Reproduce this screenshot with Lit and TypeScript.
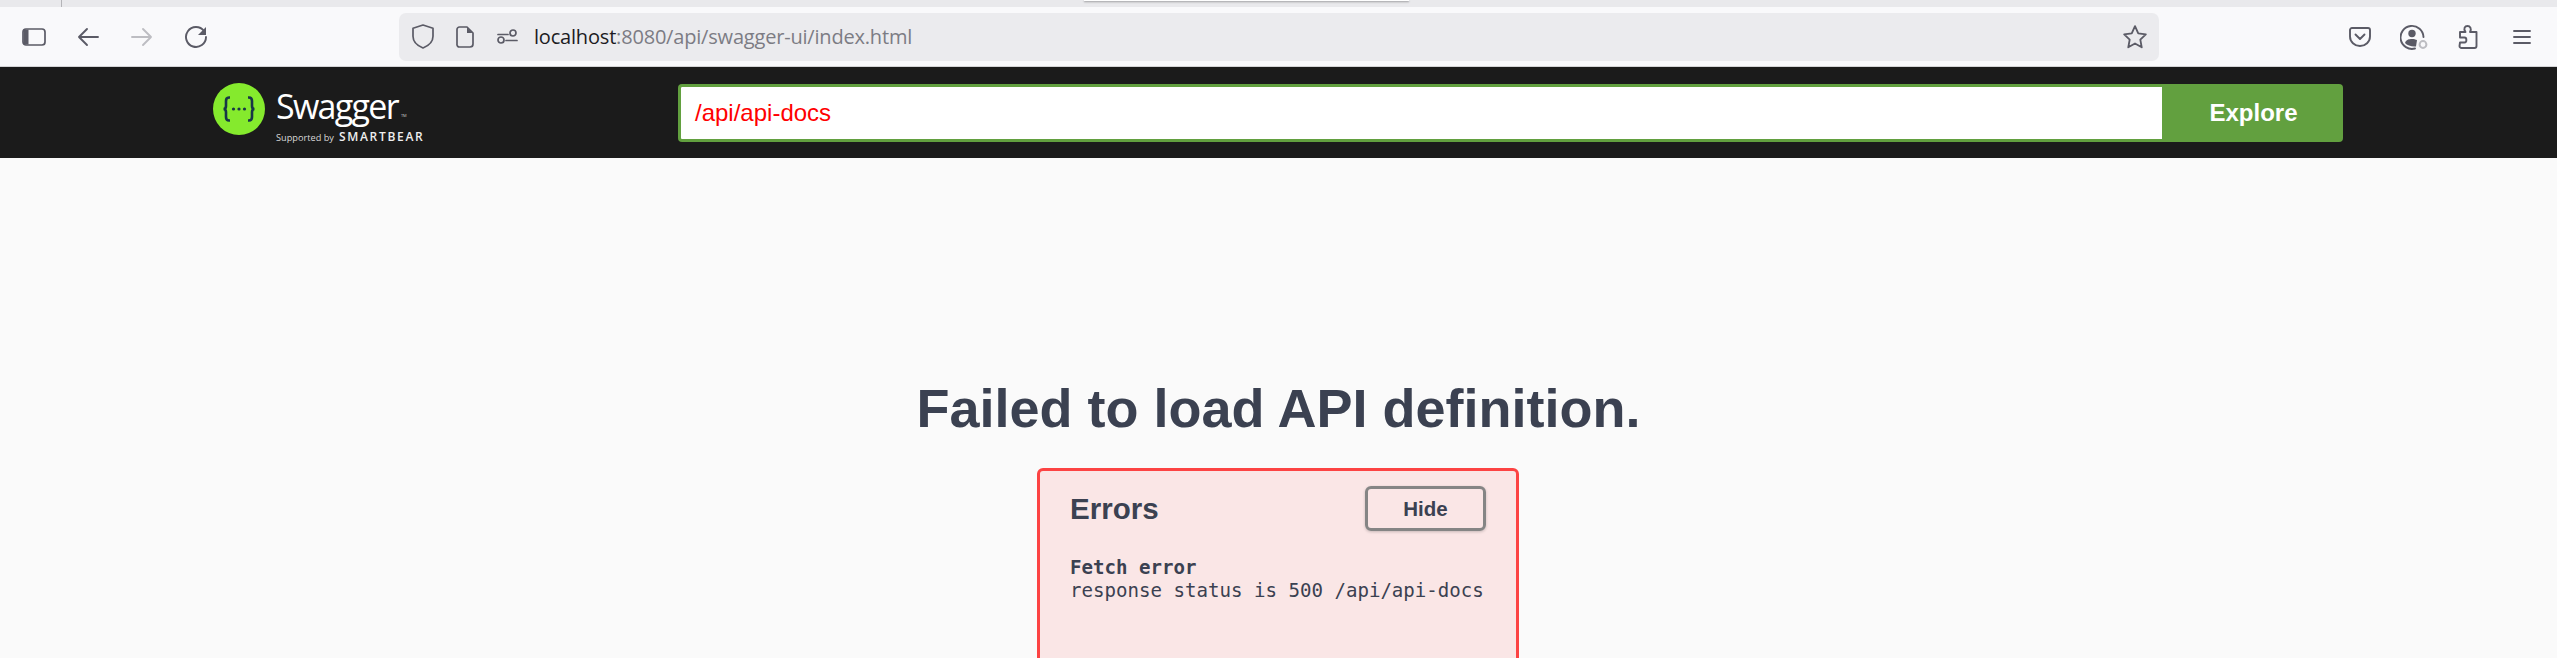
import { LitElement, html, css } from "lit";
import { customElement } from "lit/decorators.js";

@customElement("app-root")
export class AppRoot extends LitElement {
  static styles = css`
    :host { display: block; width: 2557px; height: 658px; overflow: hidden; background: #fafafa; font-family: "Liberation Sans", Arial, sans-serif; color: #3b4151; }
    .tabs { height: 7px; background: #e9e9ec; display: flex; position: relative; }
    .tabsep { margin-left: 61px; width: 1px; background: #b4b4b8; }
    .popup { position: absolute; left: 1084px; top: 0; width: 325px; height: 1px; background: #fff; box-shadow: 0 1px 2px rgba(0,0,0,.45); }
    .toolbar { height: 60px; background: #f9f9fb; border-bottom: 1px solid #d4d4d6; display: flex; align-items: center; box-sizing: border-box; }
    .tb-left { display: flex; align-items: center; width: 399px; padding-left: 22px; box-sizing: border-box; gap: 30px; }
    svg { display: block; flex: none; }
    .ico { fill: none; stroke: #5b5b66; stroke-width: 1.7; stroke-linecap: round; stroke-linejoin: round; }
    .urlbar { width: 1760px; height: 48px; border-radius: 7px; background: #ebebee; display: flex; align-items: center; padding-left: 3px; box-sizing: border-box; }
    .url { font: 20px/1 "Open Sans", "Noto Sans", sans-serif; letter-spacing: -0.19px; margin-left: 6px; color: #7c7c84; white-space: nowrap; flex: 1; }
    .url b { font-weight: 400; color: #1c1b22; }
    .url-icons { display: flex; align-items: center; }
    .cell { width: 42px; display: flex; justify-content: center; }
    .star { margin-right: 11px; }
    .tb-right { display: flex; align-items: center; margin-left: 174px; }
    .rcell { width: 54px; display: flex; justify-content: center; }
    .topbar { height: 91px; background: #1b1b1b; display: flex; align-items: center; }
    .logo { margin-left: 213px; width: 220px; align-self: flex-start; margin-top: 16px; display: flex; align-items: flex-start; gap: 11px; flex: none; }
    .logo-text { display: flex; flex-direction: column; color: #fff; font-family: "Open Sans", "Noto Sans", sans-serif; margin-top: 6px; }
    .sw { font-size: 34px; line-height: 34px; letter-spacing: -1.7px; font-weight: 400; display: flex; align-items: flex-end; }
    .tm { font-size: 4px; line-height: 4px; letter-spacing: 0; margin: 0 0 5px 3px; color: #ccc; }
    .sup { display: flex; align-items: baseline; gap: 5px; font-size: 9.2px; line-height: 12px; color: #d8d8d8; margin-top: 8px; white-space: nowrap; }
    .bear { font-size: 12px; letter-spacing: 1.7px; font-weight: 600; color: #eee; }
    .form { display: flex; margin-left: 245px; width: 1665px; height: 58px; flex: none; }
    .input { flex: 1; background: #fff; border: 3px solid #62a03f; border-right: 0; border-radius: 4px 0 0 4px; box-sizing: border-box; display: flex; align-items: center; padding-left: 14px; color: #f00; font-size: 24px; font-weight: 400; }
    .explore { width: 181px; background: #62a03f; color: #fff; font-size: 24px; font-weight: 700; display: flex; align-items: center; justify-content: center; border-radius: 0 4px 4px 0; box-sizing: border-box; padding-left: 2px; }
    .main { display: flex; flex-direction: column; align-items: center; }
    h1 { margin: 0; padding-top: 219px; font-size: 54px; line-height: 62px; font-weight: 700; color: #3b4151; white-space: nowrap; text-align: center; width: 100%; }
    .err { margin-top: 29px; margin-left: -1px; width: 482px; height: 300px; background: #fae6e6; border: 3px solid #fc4343; border-radius: 6px; box-sizing: border-box; padding: 15px 30px 15px 30px; flex: none; }
    .err-head { display: flex; align-items: center; justify-content: space-between; height: 45px; }
    h2 { margin: 0; font-size: 29.500px; font-weight: 700; color: #3b4151; }
    .hide { width: 121px; height: 45px; box-sizing: border-box; border: 3px solid #858585; border-radius: 6px; background: transparent; font: 700 20.500px "Liberation Sans", Arial, sans-serif; color: #3b4151; box-shadow: 0 1px 3px rgba(0,0,0,.2); padding: 0; }
    .msg { margin-top: 25px; font-family: "DejaVu Sans Mono", monospace; font-size: 19.100px; line-height: 23px; color: #3b4151; white-space: nowrap; }
    .msg b { display: block; font-weight: 700; }
  `;

  render() {
    return html`
      <div class="tabs"><div class="tabsep"></div><div class="popup"></div></div>
      <div class="toolbar">
        <div class="tb-left">
          <svg width="24" height="24" viewBox="0 0 24 24" class="ico"><rect x="1" y="4" width="22" height="16" rx="3"/><path d="M1.500 6.500a2 2 0 0 1 2-2h3v15h-3a2 2 0 0 1-2-2z" fill="#5b5b66" stroke="none"/></svg>
          <svg width="24" height="24" viewBox="0 0 24 24" class="ico"><path d="M22 12H3M11 4l-8 8 8 8" stroke-width="1.900"/></svg>
          <svg width="24" height="24" viewBox="0 0 24 24" class="ico" style="stroke:#bdbdc2"><path d="M2 12h19M13 4l8 8-8 8" stroke-width="1.900"/></svg>
          <svg width="24" height="24" viewBox="0 0 24 24" class="ico"><path d="M20 6A10 10 0 1 0 22 12" stroke-width="1.900"/><path d="M22 2v8h-8z" fill="#5b5b66" stroke="none"/></svg>
        </div>
        <div class="urlbar">
          <div class="url-icons">
            <div class="cell"><svg width="22" height="25" viewBox="0 0 22 25" class="ico"><path d="M11 1l10 3.200v8c0 5.500-4.500 9.500-10 11.800C5.500 21.700 1 17.700 1 12.200v-8z"/></svg></div>
            <div class="cell"><svg width="18" height="22" viewBox="0 0 18 22" class="ico"><path d="M3.500 1h7.500l6 6v11a3 3 0 0 1-3 3H3.500a2.500 2.500 0 0 1-2.500-3V3.500A2.500 2.500 0 0 1 3.500 1z"/><path d="M11 1.500V7h5.500z" fill="#5b5b66" stroke="none"/></svg></div>
            <div class="cell"><svg width="21" height="15" viewBox="0 0 21 15" class="ico"><path d="M1 5.500h10M9 11.500h11"/><circle cx="16" cy="4" r="3"/><circle cx="4" cy="11" r="3"/></svg></div>
          </div>
          <div class="url"><b>localhost</b>:8080/api/swagger-ui/index.html</div>
          <svg class="ico star" width="26" height="26" viewBox="0 0 24 24"><path d="M12 2l3 6.600 7 .9-5.100 4.900 1.300 7.100L12 18l-6.200 3.500 1.300-7.100L2 9.500l7-.9z"/></svg>
        </div>
        <div class="tb-right">
          <div class="rcell"><svg class="ico" width="22" height="20" viewBox="0 0 22 20"><path d="M3 1h16a2 2 0 0 1 2 2v6.500a10 9.500 0 0 1-20 0V3a2 2 0 0 1 2-2z" stroke-width="1.900"/><path d="M6.500 7.500L11 12l4.500-4.500" stroke-width="1.900"/></svg></div>
          <div class="rcell"><svg width="28" height="26" viewBox="0 0 28 26" class="ico"><path d="M23.500 13A11.500 11.500 0 1 0 15 24.500" stroke-width="1.900"/><circle cx="12" cy="9.500" r="3.700" fill="#5b5b66" stroke="none"/><path d="M5 19c1-3.500 4-4 7-4 2 0 3.500.5 5 1l-1 6.500c-4 .5-9-1-11-3.500z" fill="#5b5b66" stroke="none"/><circle cx="23" cy="20.500" r="3.400" stroke="#bdbdc2" stroke-width="2"/></svg></div>
          <div class="rcell"><svg class="ico" width="20" height="24" viewBox="0 0 20 24"><path d="M2 17.500h4.500c2.500 0 2.500-5 0-5H2V7h5.500C5 3.500 7 1 9.500 1S14 3.500 12 7h6.500v14a2 2 0 0 1-2 2H3.500a2 2 0 0 1-2-2z" stroke-width="1.900"/></svg></div>
          <div class="rcell"><svg class="ico" width="18" height="16" viewBox="0 0 18 16"><path d="M1 2h16M1 8h16M1 14h16" stroke-width="1.900"/></svg></div>
        </div>
      </div>
      <div class="topbar">
        <div class="logo">
          <svg width="52" height="52" viewBox="0 0 52 52"><circle cx="26" cy="26" r="26" fill="#85ea2d"/><path d="M17 14.500h-1c-2.500 0-3 1.500-3 3.500v5c0 2-.8 3-2.500 3 1.700 0 2.500 1 2.500 3v5c0 2 .5 3.500 3 3.500h1M35 14.500h1c2.500 0 3 1.500 3 3.500v5c0 2 .8 3 2.500 3-1.700 0-2.500 1-2.500 3v5c0 2-.5 3.500-3 3.500h-1" fill="none" stroke="#173647" stroke-width="2.600"/><circle cx="20.500" cy="26" r="1.600" fill="#173647"/><circle cx="26" cy="26" r="1.600" fill="#173647"/><circle cx="31.500" cy="26" r="1.600" fill="#173647"/></svg>
          <div class="logo-text">
            <div class="sw">Swagger<span class="tm">TM</span></div>
            <div class="sup"><span>Supported by</span><span class="bear">SMARTBEAR</span></div>
          </div>
        </div>
        <div class="form">
          <div class="input">/api/api-docs</div>
          <div class="explore">Explore</div>
        </div>
      </div>
      <div class="main">
        <h1>Failed to load API definition.</h1>
        <div class="err">
          <div class="err-head"><h2>Errors</h2><button class="hide">Hide</button></div>
          <div class="msg"><b>Fetch error</b>response status is 500 /api/api-docs</div>
        </div>
      </div>
    `;
  }
}
